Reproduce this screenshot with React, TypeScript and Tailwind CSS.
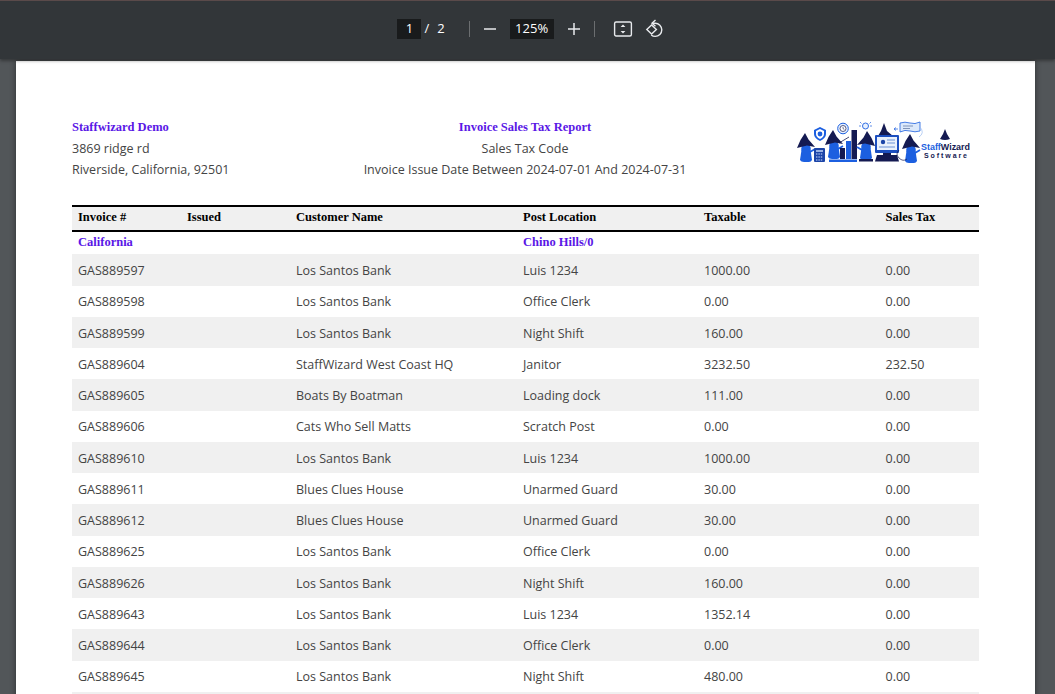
const rows = [
  ["GAS889597", "Los Santos Bank", "Luis 1234", "1000.00", "0.00"],
  ["GAS889598", "Los Santos Bank", "Office Clerk", "0.00", "0.00"],
  ["GAS889599", "Los Santos Bank", "Night Shift", "160.00", "0.00"],
  ["GAS889604", "StaffWizard West Coast HQ", "Janitor", "3232.50", "232.50"],
  ["GAS889605", "Boats By Boatman", "Loading dock", "111.00", "0.00"],
  ["GAS889606", "Cats Who Sell Matts", "Scratch Post", "0.00", "0.00"],
  ["GAS889610", "Los Santos Bank", "Luis 1234", "1000.00", "0.00"],
  ["GAS889611", "Blues Clues House", "Unarmed Guard", "30.00", "0.00"],
  ["GAS889612", "Blues Clues House", "Unarmed Guard", "30.00", "0.00"],
  ["GAS889625", "Los Santos Bank", "Office Clerk", "0.00", "0.00"],
  ["GAS889626", "Los Santos Bank", "Night Shift", "160.00", "0.00"],
  ["GAS889643", "Los Santos Bank", "Luis 1234", "1352.14", "0.00"],
  ["GAS889644", "Los Santos Bank", "Office Clerk", "0.00", "0.00"],
  ["GAS889645", "Los Santos Bank", "Night Shift", "480.00", "0.00"],
];

const serif = "font-['Liberation_Serif',serif] font-bold";

function Toolbar() {
  return (
    <div className="relative z-10 h-[59px] shrink-0 border-t border-[#5a4a4a] bg-[#323639] shadow-[0_2px_3px_rgba(0,0,0,0.35)] flex items-center justify-center text-white text-[13px]">
      <div className="flex items-center pl-[7px] -mt-[3px]">
        <span className="w-6 h-5 bg-[#191b1c] flex items-center justify-center">1</span>
        <span className="ml-[3px]">/</span>
        <span className="ml-[8px]">2</span>
        <span className="ml-[24px] w-px h-4 bg-[#6b6e70]" />
        <svg className="ml-[13px]" width="14" height="14" viewBox="0 0 14 14">
          <path d="M1 7h12" stroke="#e8eaed" strokeWidth="1.5" />
        </svg>
        <span className="ml-[13px] w-11 h-5 bg-[#191b1c] flex items-center justify-center">125%</span>
        <svg className="ml-[13px]" width="14" height="14" viewBox="0 0 14 14">
          <path d="M1 7h12M7 1v12" stroke="#e8eaed" strokeWidth="1.5" />
        </svg>
        <span className="ml-[13px] w-px h-4 bg-[#6b6e70]" />
        <svg className="ml-[18px]" width="20" height="18" viewBox="0 0 20 18" fill="none">
          <rect x="1.6" y="2" width="16.8" height="14" rx="1.5" stroke="#e8eaed" strokeWidth="1.4" />
          <path d="M10 4.5l2.4 2.6H7.6zM10 13.5l2.4-2.6H7.6z" fill="#e8eaed" />
        </svg>
        <svg className="ml-[12px]" width="20" height="20" viewBox="0 0 20 20" fill="none" stroke="#e8eaed" strokeWidth="1.4">
          <path d="M7 4.2h3.2a6.6 6.6 0 1 1 0 13.2 6.6 6.6 0 0 1-4-1.4" />
          <path d="M10.5 1L7 4.2l3.5 3" />
          <path d="M1.8 10.5l4.8-4.6 4.8 4.6-4.8 4.6z" />
        </svg>
      </div>
    </div>
  );
}

// hat tip at x,y, hat about 16 wide and 15 tall, body below it
function Wizard({ x, y, flip = false }: { x: number; y: number; flip?: boolean }) {
  return (
    <g transform={`translate(${x} ${y}) scale(${flip ? -1 : 1} 1)`}>
      <circle cx="1" cy="16" r="4.8" fill="#1c5fe0" />
      <path d="M-3.5 17h9l1.5 10q-1 2-3 2h-5q-3 0-4-2z" fill="#1c5fe0" />
      <path d="M5 19l5-3" stroke="#1c5fe0" strokeWidth="1.8" />
      <path d="M0 0L3.5 6.5 10 14 2 12.5 -8 15 -4.5 7z" fill="#141a52" />
    </g>
  );
}

function Logo() {
  return (
    <div className="w-[175px] h-[46px] ml-auto mr-[8px] mt-[3px]">
      <svg width="175" height="46" viewBox="797 120 175 46">
        <Wizard x={806} y={133} />
        <path d="M815 130l6-3 6 3v4q0 4-6 7-6-3-6-7z" fill="#1c5fe0" />
        <path d="M817 131l4-2 4 2v3q0 3-4 5-4-2-4-5z" fill="#fff" />
        <circle cx="821" cy="134" r="2.4" fill="#1c5fe0" />
        <rect x="815" y="148" width="11" height="14" rx="1" fill="#1c45a8" />
        <path d="M817 151h7" stroke="#cfe0ff" strokeWidth="1.4" />
        <path d="M817 154h7M817 157h7M817 160h7" stroke="#cfe0ff" strokeWidth="1.2" strokeDasharray="1.4 1" />
        <Wizard x={834} y={130} />
        <circle cx="844" cy="128.5" r="5.3" fill="#e6f0ff" stroke="#1c5fe0" strokeWidth="1" />
        <circle cx="844" cy="128.5" r="3" fill="#fff" stroke="#141a52" strokeWidth="0.7" />
        <path d="M844 127v1.6l1.3.7" stroke="#141a52" strokeWidth="0.6" fill="none" />
        <path d="M840 143l10-6" stroke="#141a52" strokeWidth="0.8" />
        <rect x="841" y="148" width="5" height="11" fill="#141a52" />
        <rect x="847" y="141" width="5" height="18" fill="#1c5fe0" />
        <rect x="852.5" y="130" width="5.5" height="29" fill="#141a52" />
        <rect x="830" y="159.5" width="28" height="2.5" fill="#1c5fe0" />
        <Wizard x={868} y={131} flip />
        <circle cx="866.5" cy="126" r="3" fill="#e6f0ff" stroke="#1c5fe0" strokeWidth="0.9" />
        <path d="M861 122l1.5 1.5M872 122l-1.5 1.5M860 126h2M873 126h-2" stroke="#1c5fe0" strokeWidth="0.7" />
        <rect x="860" y="159" width="14" height="2.5" fill="#141a52" />
        <path d="M885 123l3 8 6 5H879l3-5z" fill="#141a52" />
        <rect x="876" y="135" width="24" height="18" rx="1" fill="#1c4fc0" />
        <rect x="878" y="137" width="20" height="13" fill="#eaf1fc" />
        <circle cx="884" cy="142" r="2.2" fill="#1c45a8" />
        <path d="M888 140h8M888 143h8M880 147h16" stroke="#6c93d8" strokeWidth="1" />
        <path d="M884 153h8v2h-8z" fill="#141a52" />
        <path d="M878 155h20l2 6.5h-24z" fill="#141a52" />
        <path d="M901 123q5-1.6 10 0t10-1v9q-5 1.6-10 0t-10 1z" fill="#dce9fb" stroke="#1c5fe0" strokeWidth="0.8" />
        <path d="M904 126h10M904 128.5h7" stroke="#7f93b8" strokeWidth="1" />
        <path d="M899 129h-4M895 129l2-1.5M895 129l2 1.5" stroke="#1c5fe0" strokeWidth="0.7" fill="none" />
        <path d="M921 127q5 6-1 10" stroke="#9bbcf0" strokeWidth="0.7" fill="none" />
        <Wizard x={911} y={134} />
        <path d="M900 150q-4 4 0 8t8 1" stroke="#141a52" strokeWidth="0.7" fill="none" />
        <path d="M946 129l2 5 3 5q-5 2-10 0l3-5z" fill="#141a52" />
        <text x="922" y="150" fontFamily="'Liberation Sans',sans-serif" fontSize="9" fontWeight="700" fill="#1c5fe0" textLength="49" lengthAdjust="spacingAndGlyphs">
          Staff<tspan fill="#141a52">Wizard</tspan>
        </text>
        <text x="925" y="157.5" fontFamily="'Liberation Sans',sans-serif" fontSize="7" fontWeight="700" fill="#141a52" textLength="43">
          Software
        </text>
      </svg>
    </div>
  );
}

function ReportHeader() {
  return (
    <div className="grid grid-cols-[260px_1fr_260px] h-[63px]">
      <div className="leading-[21px]">
        <div className={`${serif} text-[12.5px] text-[#5a17e6]`}>Staffwizard Demo</div>
        <div>3869 ridge rd</div>
        <div>Riverside, California, 92501</div>
      </div>
      <div className="text-center leading-[21px] pr-[1px]">
        <div className={`${serif} text-[12.5px] text-[#5a17e6]`}>Invoice Sales Tax Report</div>
        <div>Sales Tax Code</div>
        <div>Invoice Issue Date Between 2024-07-01 And 2024-07-31</div>
      </div>
      <Logo />
    </div>
  );
}

function Cell({ className = "", children }: { className?: string; children?: React.ReactNode }) {
  return <div className={`px-[6px] ${className}`}>{children}</div>;
}

const cols = "grid grid-cols-[109px_109px_227px_181px_181.5px_1fr] items-center";

function ReportTable() {
  return (
    <div className="mt-[25px]">
      <div className={`${cols} ${serif} text-[12.5px] text-black h-[27px] pb-[2px] bg-[#f0f0f0] border-y-2 border-black`}>
        <Cell>Invoice #</Cell>
        <Cell>Issued</Cell>
        <Cell>Customer Name</Cell>
        <Cell>Post Location</Cell>
        <Cell>Taxable</Cell>
        <Cell>Sales Tax</Cell>
      </div>
      <div className={`${cols} ${serif} text-[12.5px] text-[#5a17e6] h-[22.3px] pb-[2px]`}>
        <Cell>California</Cell>
        <Cell />
        <Cell />
        <Cell>Chino Hills/0</Cell>
        <Cell />
        <Cell />
      </div>
      {rows.map((r, i) => (
        <div key={r[0]} className={`${cols} h-[31.25px] pt-[3px] ${i % 2 === 0 ? "bg-[#f0f0f0]" : ""}`}>
          <Cell>{r[0]}</Cell>
          <Cell />
          <Cell>{r[1]}</Cell>
          <Cell>{r[2]}</Cell>
          <Cell>{r[3]}</Cell>
          <Cell>{r[4]}</Cell>
        </div>
      ))}
      <div className="h-[31px] bg-[#f0f0f0]" />
    </div>
  );
}

export default function App() {
  return (
    <div className="h-[694px] w-[1055px] overflow-hidden flex flex-col bg-[#525659] font-['Open_Sans',sans-serif] text-[12.5px] text-[#444444]">
      <Toolbar />
      <div className="flex-1 min-h-0 px-4 pt-[2px] overflow-hidden">
        <div className="w-[1019px] bg-white pt-[56px] px-[56px] h-[700px] shadow-[0_0_6px_rgba(0,0,0,0.45)]">
          <ReportHeader />
          <ReportTable />
        </div>
      </div>
    </div>
  );
}
